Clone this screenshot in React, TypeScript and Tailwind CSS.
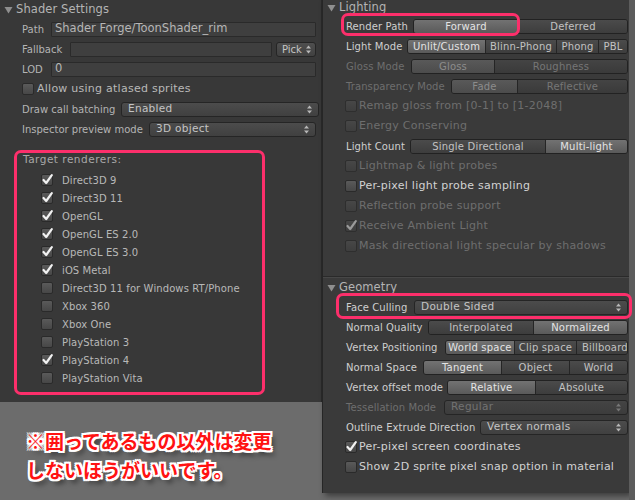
import React from "react";

type Seg = { label: string; w: string; on?: boolean; left?: boolean };

function Tri() {
  return (
    <svg width="9" height="8" viewBox="0 0 9 8" className="shrink-0">
      <path d="M0.5 1 L8.5 1 L4.5 7.5 Z" fill="#8f8f8f" />
    </svg>
  );
}

function Header({ title }: { title: string }) {
  return (
    <div className="flex items-center h-full pl-[4px] gap-[3px]">
      <Tri />
      <span className="text-[11.5px] tracking-[0.1px] text-[#b4b4b4]">{title}</span>
    </div>
  );
}

function Check({ checked, dim }: { checked?: boolean; dim?: boolean }) {
  return (
    <div
      className={
        "relative w-[12px] h-[12px] shrink-0 rounded-[2px] border " +
        (dim
          ? "border-[#2e2e2e] bg-linear-to-b from-[#474747] to-[#3e3e3e]"
          : "border-[#2a2a2a] bg-linear-to-b from-[#5a5a5a] to-[#474747]")
      }
    >
      {checked && (
        <svg width="13" height="13" viewBox="0 0 13 13" className="absolute -left-[1px] -top-[2px]">
          <path
            d="M2.5 7 L5.2 10 L10.8 2.2"
            fill="none"
            stroke={dim ? "#9a9a9a" : "#f2f2f2"}
            strokeWidth="2.2"
            strokeLinecap="round"
            strokeLinejoin="round"
          />
        </svg>
      )}
    </div>
  );
}

function Arrows({ dim }: { dim?: boolean }) {
  const c = dim ? "#777" : "#b8b8b8";
  return (
    <svg width="5" height="9" viewBox="0 0 5 9" className="shrink-0">
      <path d="M0 3.5 L2.5 0.5 L5 3.5 Z" fill={c} />
      <path d="M0 5.5 L2.5 8.5 L5 5.5 Z" fill={c} />
    </svg>
  );
}

function Dropdown({ text, dim, className = "" }: { text: string; dim?: boolean; className?: string }) {
  return (
    <div
      className={
        "h-[15px] flex items-center justify-between pl-[6px] pr-[6px] rounded-[3px] border border-[#252525] bg-linear-to-b " +
        (dim ? "from-[#444] to-[#3c3c3c] text-[#727272] " : "from-[#4c4c4c] to-[#404040] text-[#c4c4c4] ") +
        className
      }
    >
      <span className="text-[10.5px] tracking-[0.3px] whitespace-nowrap">{text}</span>
      <Arrows dim={dim} />
    </div>
  );
}

function Field({ text, className = "" }: { text?: string; className?: string }) {
  return (
    <div
      className={
        "h-[15px] flex items-center pl-[3px] border border-[#2a2a2a] bg-[#3f3f3f] rounded-[1px] text-[11.5px] text-[#b6b6b6] " +
        className
      }
    >
      {text}
    </div>
  );
}

function Segmented({ segs, dim }: { segs: Seg[]; dim?: boolean }) {
  return (
    <div className="flex-1 flex h-[15px] rounded-[3px] overflow-hidden border border-[#222]">
      {segs.map((s, i) => {
        let cls = "";
        if (s.on) {
          cls = dim
            ? "from-[#595959] to-[#4c4c4c] text-[#8c8c8c]"
            : "from-[#727272] to-[#5a5a5a] text-[#e4e4e4]";
        } else {
          cls = dim
            ? "from-[#444] to-[#3a3a3a] text-[#767676]"
            : "from-[#4b4b4b] to-[#3d3d3d] text-[#c2c2c2]";
        }
        return (
          <div
            key={s.label}
            className={
              "flex items-center overflow-hidden whitespace-nowrap bg-linear-to-b text-[10px] tracking-[0.2px] " +
              cls +
              " " +
              s.w +
              (i > 0 ? " border-l border-[#252525]" : "") +
              (s.left ? " justify-start pl-[5px]" : " justify-center")
            }
          >
            {s.label}
          </div>
        );
      })}
    </div>
  );
}

function LRow({ label, lw, children }: { label: string; lw: string; children: React.ReactNode }) {
  return (
    <div className="h-5 flex items-center pl-[22px] pr-[5px]">
      <span className={"text-[10px] tracking-[0px] text-[#b4b4b4] whitespace-nowrap shrink-0 " + lw}>{label}</span>
      {children}
    </div>
  );
}

function RRow({
  label,
  lw,
  dim,
  children,
  ring,
}: {
  label: string;
  lw: string;
  dim?: boolean;
  children: React.ReactNode;
  ring?: string;
}) {
  return (
    <div className="relative h-5 flex items-center pl-[23px] pr-[1px]">
      <span
        className={
          "text-[10px] tracking-[0.1px] whitespace-nowrap shrink-0 " +
          (dim ? "text-[#6e6e6e] " : "text-[#cfcfcf] ") +
          lw
        }
      >
        {label}
      </span>
      {children}
      {ring && <div className={"absolute border-[3px] border-[#fc2f6b] rounded-[7px] " + ring} />}
    </div>
  );
}

function CRow({ label, checked, dim }: { label: string; checked?: boolean; dim?: boolean }) {
  return (
    <div className="h-5 flex items-center pl-[22px] gap-[2px]">
      <Check checked={checked} dim={dim} />
      <span className={"text-[11px] tracking-[0.25px] whitespace-nowrap " + (dim ? "text-[#6e6e6e]" : "text-[#d2d2d2]")}>
        {label}
      </span>
    </div>
  );
}

const renderers: [string, boolean][] = [
  ["Direct3D 9", true],
  ["Direct3D 11", true],
  ["OpenGL", true],
  ["OpenGL ES 2.0", true],
  ["OpenGL ES 3.0", true],
  ["iOS Metal", true],
  ["Direct3D 11 for Windows RT/Phone", false],
  ["Xbox 360", false],
  ["Xbox One", false],
  ["PlayStation 3", false],
  ["PlayStation 4", true],
  ["PlayStation Vita", false],
];

const outline =
  "[text-shadow:-2px_-2px_0_#fff,2px_-2px_0_#fff,-2px_2px_0_#fff,2px_2px_0_#fff,0_-2px_0_#fff,0_2px_0_#fff,-2px_0_0_#fff,2px_0_0_#fff,4px_5px_5px_rgba(0,0,0,0.55)]";

export default function App() {
  return (
    <div className="w-[635px] h-[500px] overflow-hidden bg-[#6c6c6c] flex font-['DejaVu_Sans',sans-serif]">
      {/* left column */}
      <div className="w-[322px] shrink-0 flex flex-col">
        <div className="h-[402px] bg-[#383838] border-r border-[#2a2a2a] flex flex-col">
          <div className="h-[19px]">
            <Header title="Shader Settings" />
          </div>
          <LRow label="Path" lw="w-[29px]">
            <Field text="Shader Forge/ToonShader_rim" className="flex-1" />
          </LRow>
          <LRow label="Fallback" lw="w-[48px]">
            <Field className="flex-1" />
            <div className="ml-[4px] w-[40px] h-[15px] flex items-center justify-between pl-[5px] pr-[4px] rounded-[3px] border border-[#252525] bg-linear-to-b from-[#4e4e4e] to-[#414141]">
              <span className="text-[10px] text-[#c4c4c4]">Pick</span>
              <Arrows />
            </div>
          </LRow>
          <LRow label="LOD" lw="w-[29px]">
            <Field text="0" className="flex-1" />
          </LRow>
          <div className="h-5 flex items-center pl-[22px] gap-[3px]">
            <Check />
            <span className="text-[11px] tracking-[0.25px] text-[#b8b8b8]">Allow using atlased sprites</span>
          </div>
          <LRow label="Draw call batching" lw="w-[99px]">
            <Dropdown text="Enabled" className="flex-1 -mr-[3px]" />
          </LRow>
          <LRow label="Inspector preview mode" lw="w-[127px]">
            <Dropdown text="3D object" className="flex-1" />
          </LRow>

          <div className="mt-[11px] ml-[14px] w-[251px] h-[245px] border-[3px] border-[#fc2f6b] rounded-[7px] flex flex-col">
            <div className="h-[14px] flex items-center pl-[6px] text-[10.5px] tracking-[0.5px] text-[#a8a8a8]">
              Target renderers:
            </div>
            <div className="mt-[4px] pl-[24px] flex flex-col">
              {renderers.map(([name, on]) => (
                <div key={name} className="h-[18px] flex items-center gap-[9px]">
                  <Check checked={on} />
                  <span className="text-[10px] tracking-[0.1px] text-[#b8b8b8] whitespace-nowrap">{name}</span>
                </div>
              ))}
            </div>
          </div>
        </div>

        <div
          className={
            "mt-[24px] pl-[26px] flex flex-col text-[19px] leading-[29px] font-bold text-[#ff1212] font-['Noto_Sans_CJK_JP',sans-serif] " +
            outline
          }
        >
          <span>※囲ってあるもの以外は変更</span>
          <span>しないほうがいいです。</span>
        </div>
      </div>

      {/* right panel */}
      <div className="w-[307px] h-[493px] shrink-0 bg-[#3a3a3a] border-l border-[#262626] flex flex-col [box-shadow:3px_3px_6px_rgba(0,0,0,0.45)]">
        <div className="h-[16px]">
          <Header title="Lighting" />
        </div>
        <RRow label="Render Path" lw="w-[67px]" ring="left-[18px] -top-[3px] w-[179px] h-[23px]">
          <Segmented
            segs={[
              { label: "Forward", w: "w-[104px]", on: true },
              { label: "Deferred", w: "flex-1" },
            ]}
          />
        </RRow>
        <RRow label="Light Mode" lw="w-[61px]">
          <Segmented
            segs={[
              { label: "Unlit/Custom", w: "w-[77px]", on: true },
              { label: "Blinn-Phong", w: "w-[71px]" },
              { label: "Phong", w: "w-[42px]" },
              { label: "PBL", w: "flex-1" },
            ]}
          />
        </RRow>
        <RRow label="Gloss Mode" lw="w-[65px]" dim>
          <Segmented
            dim
            segs={[
              { label: "Gloss", w: "w-[82px]", on: true },
              { label: "Roughness", w: "flex-1" },
            ]}
          />
        </RRow>
        <RRow label="Transparency Mode" lw="w-[105px]" dim>
          <Segmented
            dim
            segs={[
              { label: "Fade", w: "w-[65px]", on: true },
              { label: "Reflective", w: "flex-1" },
            ]}
          />
        </RRow>
        <CRow label="Remap gloss from [0-1] to [1-2048]" dim />
        <CRow label="Energy Conserving" dim />
        <RRow label="Light Count" lw="w-[64px]">
          <Segmented
            segs={[
              { label: "Single Directional", w: "w-[134px]" },
              { label: "Multi-light", w: "flex-1", on: true },
            ]}
          />
        </RRow>
        <CRow label="Lightmap & light probes" dim />
        <CRow label="Per-pixel light probe sampling" />
        <CRow label="Reflection probe support" dim />
        <CRow label="Receive Ambient Light" checked dim />
        <CRow label="Mask directional light specular by shadows" dim />

        <div className="h-[20px]" />
        <div className="h-[2px] border-t border-[#2a2a2a] bg-[#474747]" />
        <div className="h-[19px]">
          <Header title="Geometry" />
        </div>
        <RRow label="Face Culling" lw="w-[68px]" ring="left-[13px] -top-[4px] w-[296px] h-[26px]">
          <Dropdown text="Double Sided" className="flex-1" />
        </RRow>
        <RRow label="Normal Quality" lw="w-[82px]">
          <Segmented
            segs={[
              { label: "Interpolated", w: "w-[104px]" },
              { label: "Normalized", w: "flex-1", on: true },
            ]}
          />
        </RRow>
        <RRow label="Vertex Positioning" lw="w-[99px]">
          <Segmented
            segs={[
              { label: "World space", w: "w-[68px]", on: true },
              { label: "Clip space", w: "w-[62px]" },
              { label: "Billboard", w: "flex-1", left: true },
            ]}
          />
        </RRow>
        <RRow label="Normal Space" lw="w-[77px]">
          <Segmented
            segs={[
              { label: "Tangent", w: "w-[77px]", on: true },
              { label: "Object", w: "w-[68px]" },
              { label: "World", w: "flex-1" },
            ]}
          />
        </RRow>
        <RRow label="Vertex offset mode" lw="w-[101px]">
          <Segmented
            segs={[
              { label: "Relative", w: "w-[87px]", on: true },
              { label: "Absolute", w: "flex-1" },
            ]}
          />
        </RRow>
        <RRow label="Tessellation Mode" lw="w-[98px]" dim>
          <Dropdown text="Regular" dim className="flex-1" />
        </RRow>
        <RRow label="Outline Extrude Direction" lw="w-[134px]">
          <Dropdown text="Vertex normals" className="flex-1" />
        </RRow>
        <CRow label="Per-pixel screen coordinates" checked />
        <CRow label="Show 2D sprite pixel snap option in material" />
      </div>
      <div className="flex-1 bg-[#5c5c5c]" />
    </div>
  );
}
